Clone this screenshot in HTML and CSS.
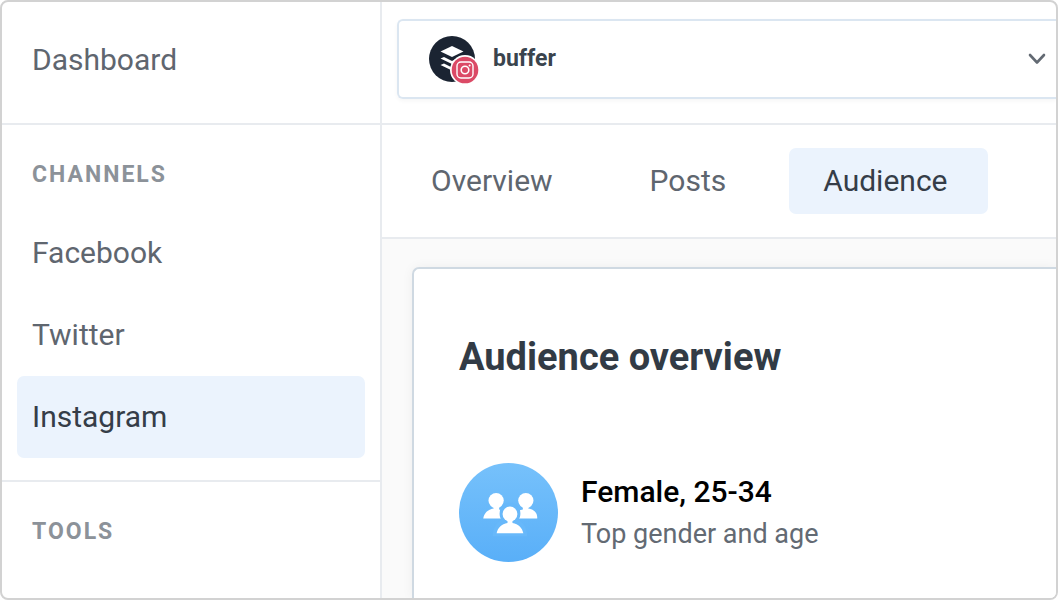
FILE: index.html
```html
<!DOCTYPE html>
<html lang="en">
<head>
<meta charset="utf-8">
<meta name="viewport" content="width=device-width, initial-scale=1">
<title>Audience</title>
<link rel="stylesheet" href="styles.css">
</head>
<body>
<div class="frame">
  <nav class="sidebar" aria-label="Main">
    <section class="group">
      <a class="nav-link" href="#dashboard">Dashboard</a>
    </section>
    <section class="group">
      <h2 class="group-title">CHANNELS</h2>
      <a class="nav-link" href="#facebook">Facebook</a>
      <a class="nav-link" href="#twitter">Twitter</a>
      <a class="nav-link active" href="#instagram" aria-current="page">Instagram</a>
    </section>
    <section class="group">
      <h2 class="group-title">TOOLS</h2>
    </section>
  </nav>
  <div class="main">
    <header class="topbar">
      <label class="account">
        <svg class="avatar" viewBox="0 0 50 50" role="img" aria-label="Account">
          <circle cx="23" cy="23" r="23" fill="#1b2432"/>
          <path d="M23 10 34.500 15.500 23 21 11.500 15.500Z" fill="#fff"/>
          <path d="M11.500 22.500 15 21 23 25 31 21 34.500 22.500 23 28Z" fill="#fff"/>
          <path d="M11.500 29 15 27.500 23 31.500 31 27.500 34.500 29 23 34.500Z" fill="#fff"/>
          <circle cx="36" cy="34" r="15" fill="#fff"/>
          <circle cx="36" cy="34" r="13.300" fill="#db4a66"/>
          <rect x="28" y="26" width="16" height="16" rx="4" fill="none" stroke="#fff" stroke-width="1.400"/>
          <circle cx="36" cy="34" r="3.800" fill="none" stroke="#fff" stroke-width="1.600"/>
          <circle cx="40.600" cy="29.400" r="1" fill="#fff"/>
        </svg>
        <select class="account-select" aria-label="Account">
          <option>buffer</option>
        </select>
        <svg class="chevron" viewBox="0 0 18 12" aria-hidden="true"><path d="M2 2 9 9.500 16 2" fill="none" stroke="#636a73" stroke-width="2.600" stroke-linecap="round" stroke-linejoin="round"/></svg>
      </label>
    </header>
    <nav class="tabs" aria-label="Reports">
      <a class="tab" href="#overview">Overview</a>
      <a class="tab" href="#posts">Posts</a>
      <a class="tab active" href="#audience" aria-current="page">Audience</a>
    </nav>
    <main class="content">
      <section class="card">
        <h1 class="card-title">Audience overview</h1>
        <div class="stat">
          <svg class="stat-icon" viewBox="0 0 100 100" aria-hidden="true">
            <defs><linearGradient id="sky" x1="0" y1="0" x2="0" y2="1"><stop offset="0" stop-color="#76c1fb"/><stop offset="1" stop-color="#59aff8"/></linearGradient></defs>
            <circle cx="50" cy="50" r="50" fill="url(#sky)"/>
            <g fill="#fff">
              <circle cx="37.500" cy="38" r="7.700"/>
              <path d="M35 44h5.500v3c5 1 8.500 4 9.500 9H24.500c1-5.500 4.500-9 10.500-10Z"/>
              <circle cx="67.500" cy="38" r="7.700"/>
              <path d="M64.500 44H70v2c6 1 9.500 4.500 9 10H54c1-5 4.500-8 10.500-9Z"/>
            </g>
            <path d="M51.500 40c6.500 0 10.500 5 10.500 11 0 2.500-.5 4.500-2 6.500 5 2.500 8.500 8 9 16.500h-35c.5-8.500 4-14 9-16.500-1.500-2-2-4-2-6.500 0-6 4-11 10.500-11Z" fill="#67b8fa"/>
            <circle cx="51.500" cy="51.500" r="7.500" fill="#fff"/>
            <path d="M49 58h5v2.500c6 1 10 5 11 10.500H38c1-5.500 5-9.500 11-10.500Z" fill="#fff"/>
          </svg>
          <div class="stat-text">
            <p class="stat-value">Female, 25-34</p>
            <p class="stat-label">Top gender and age</p>
          </div>
        </div>
      </section>
    </main>
  </div>
</div>
</body>
</html>
```

FILE: styles.css
```css
* { box-sizing: border-box; }

body {
  margin: 0;
  background: #fff;
  color: #323b45;
  font-family: Roboto, "Liberation Sans", sans-serif;
}

h1, h2, p { margin: 0; }

.frame {
  display: flex;
  min-height: 100vh;
  border: 2px solid #d2d2d2;
  border-radius: 8px;
  overflow: hidden;
}

.sidebar {
  flex: 0 0 380px;
  border-right: 2px solid #e8ebef;
}

.group { padding: 17px 15px 22px; }
.group + .group { border-top: 2px solid #e8ebef; }

.group-title {
  padding: 19px 15px 23px;
  color: #8c9299;
  font-size: 23px;
  line-height: 28px;
  font-weight: 700;
  letter-spacing: 2px;
}

.nav-link, .tab {
  display: block;
  border-radius: 7px;
  color: #5f666f;
  font-size: 30px;
  line-height: 36px;
  text-decoration: none;
}

.nav-link { padding: 23px 15px; }
.tab { padding: 15px 40px 15px 34px; }

.nav-link.active, .tab.active {
  background: #ebf3fd;
  color: #353d48;
}

.main {
  flex: 1;
  min-width: 0;
  display: flex;
  flex-direction: column;
}

.topbar {
  padding: 17px 0 24px 15px;
  border-bottom: 2px solid #e8ebef;
}

.account {
  display: flex;
  align-items: center;
  height: 80px;
  padding: 0 10px 0 30px;
  border: 2px solid #dbe6f1;
  border-right: 0;
  border-radius: 6px 0 0 6px;
  box-shadow: 0 2px 4px rgba(0, 0, 0, 0.04);
}

.avatar { width: 50px; height: 50px; margin-top: 4px; }

.account-select {
  flex: 1;
  min-width: 0;
  padding: 0 0 0 14px;
  border: 0;
  appearance: none;
  background: transparent;
  color: #3a444d;
  font: 700 23px/32px Roboto, "Liberation Sans", sans-serif;
}

.chevron { width: 18px; height: 12px; }

.tabs {
  display: flex;
  gap: 23px;
  padding: 23px 15px;
  border-bottom: 2px solid #e8ebef;
}

.content {
  flex: 1;
  display: flex;
  padding: 28px 0 0 30px;
  background: #fafafa;
}

.card {
  flex: 1;
  padding: 66px 45px 36px;
  border: 2px solid #cfd9e2;
  border-width: 2px 0 0 2px;
  border-radius: 7px 0 0 0;
  background: #fff;
  box-shadow: 0 0 12px rgba(0, 0, 0, 0.05);
}

.card-title {
  font-size: 38px;
  line-height: 44px;
  font-weight: 700;
}

.stat {
  display: flex;
  align-items: center;
  gap: 23px;
  margin-top: 84px;
}

.stat-icon { flex: none; width: 99px; height: 99px; }

.stat-value {
  color: #000;
  font-size: 30px;
  line-height: 42px;
  font-weight: 500;
}

.stat-label {
  color: #636a73;
  font-size: 27px;
  line-height: 42px;
}
```
